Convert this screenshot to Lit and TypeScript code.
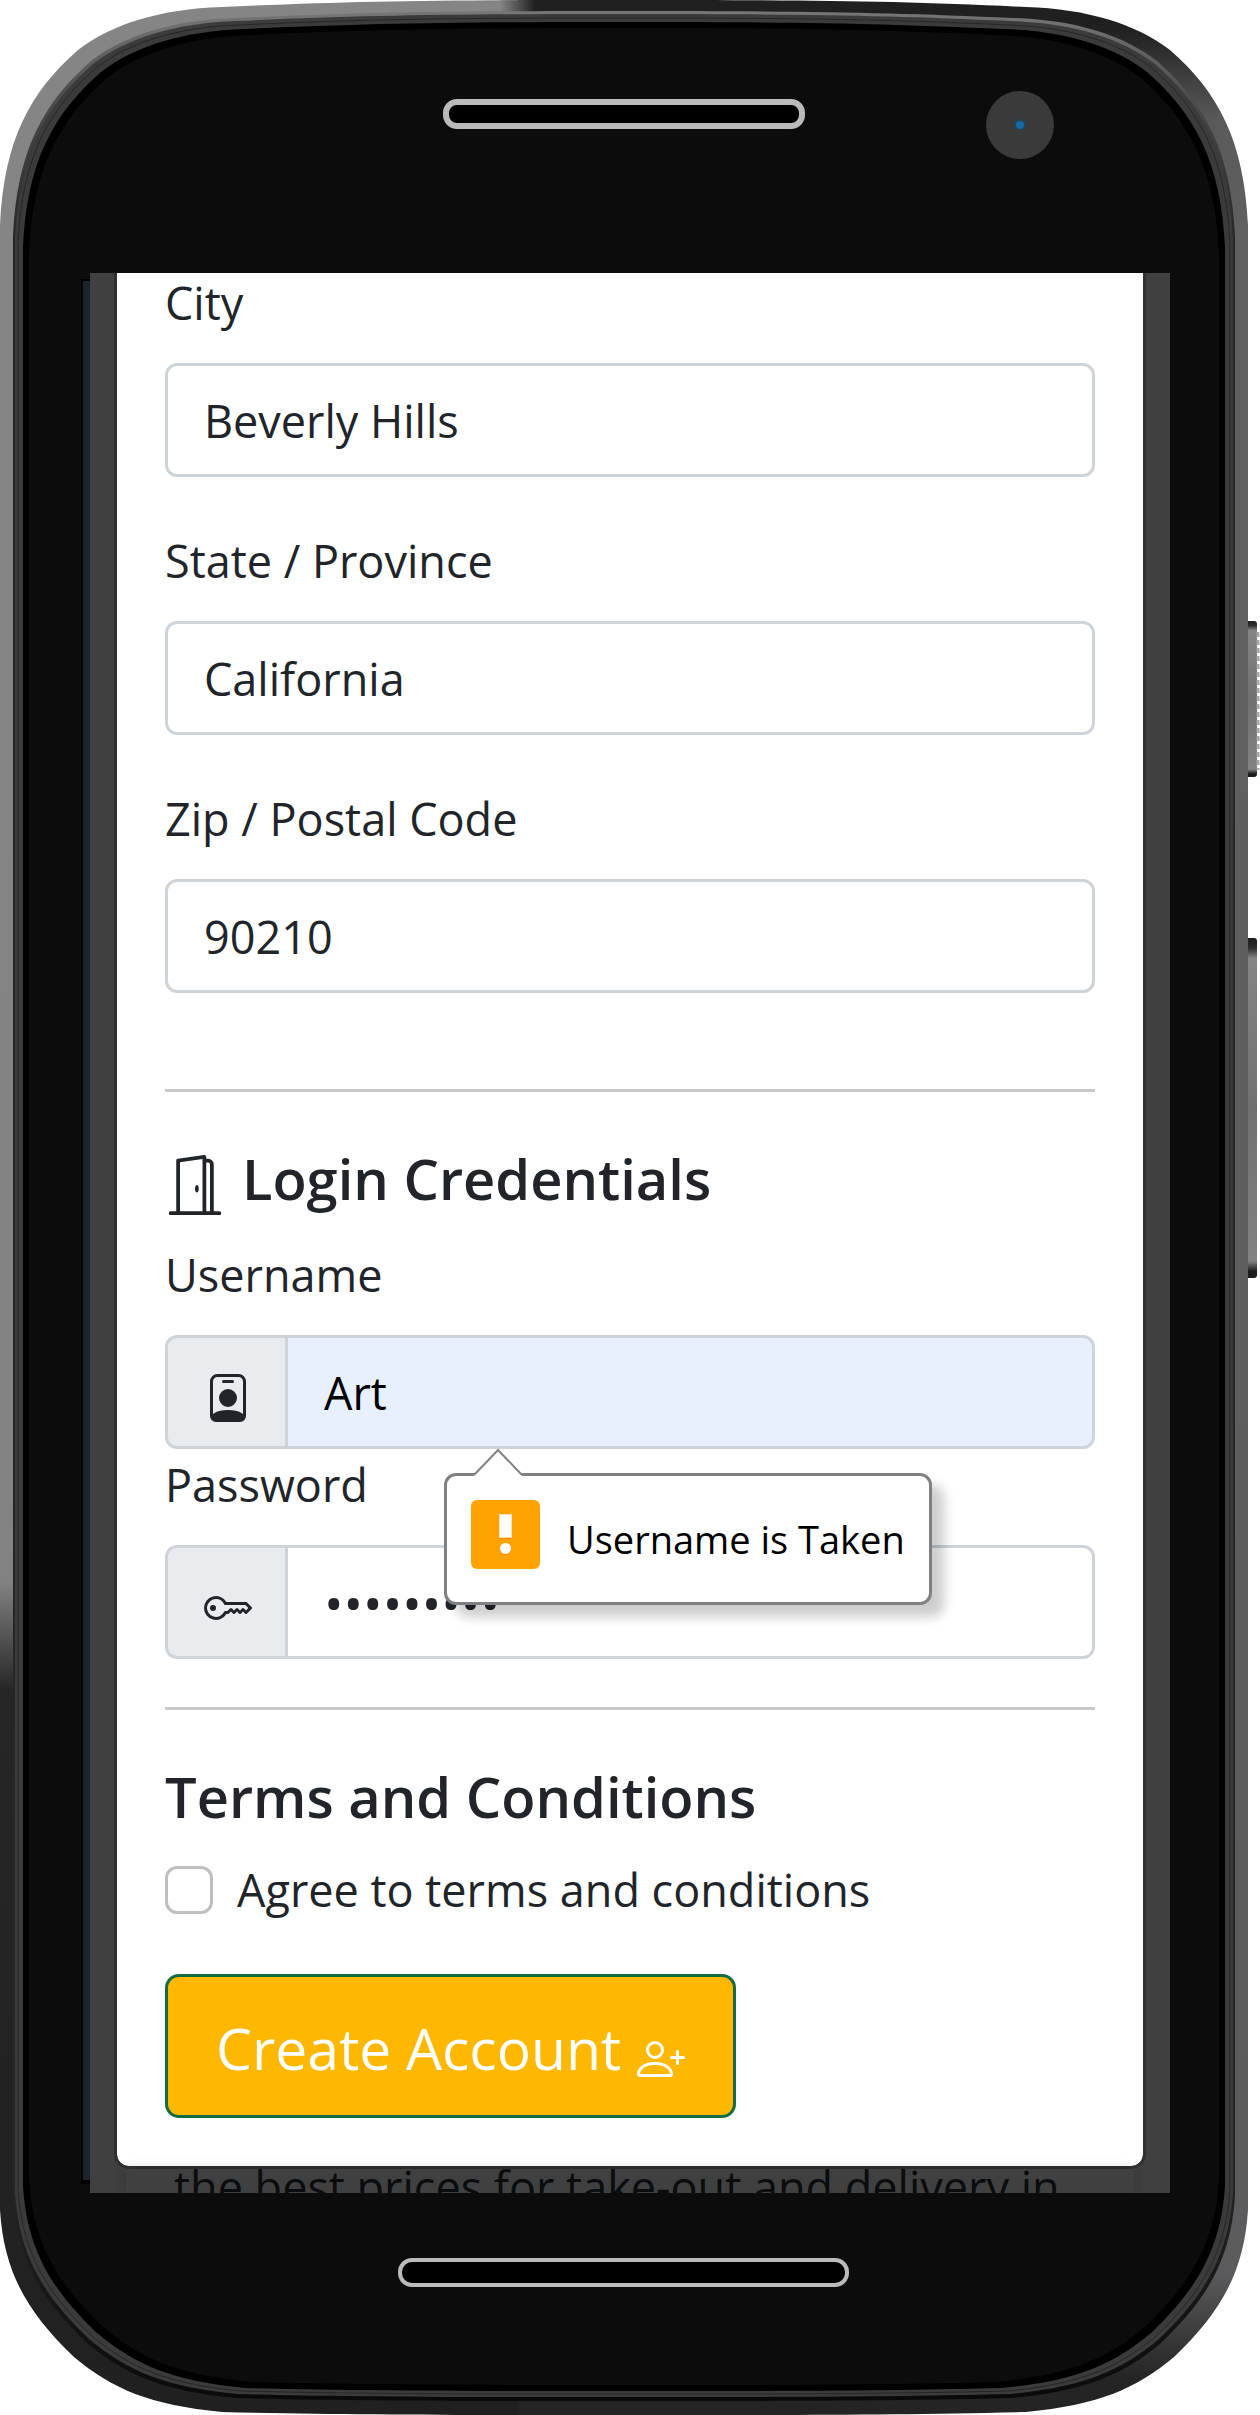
import { LitElement, html, css, svg } from "lit";
import { customElement, state } from "lit/decorators.js";

/** Closed outline of the handset, inset to the given edges. */
function bodyOutline(l: number, t: number, r: number, b: number): string {
  const mid = (l + r) / 2;
  const top = (x: number, y: number) => `${l + x} ${t + y}`;
  const topR = (x: number, y: number) => `${r - x} ${t + y}`;
  const botR = (x: number, y: number) => `${r - x} ${b - y}`;
  const botL = (x: number, y: number) => `${l + x} ${b - y}`;
  return [
    `M${top(0, 225)}`,
    `C${top(4, 140)} ${top(30, 92)} ${top(78, 50)}`,
    `C${top(112, 24)} ${top(160, 9)} ${top(222, 7)}`,
    `C${top(350, 1)} ${top(440, 0)} ${mid} ${t}`,
    `C${topR(440, 0)} ${topR(350, 1)} ${topR(222, 7)}`,
    `C${topR(160, 9)} ${topR(112, 24)} ${topR(78, 50)}`,
    `C${topR(30, 92)} ${topR(4, 140)} ${topR(0, 225)}`,
    `L${botR(0, 205)}`,
    `C${botR(4, 140)} ${botR(30, 100)} ${botR(74, 58)}`,
    `C${botR(112, 26)} ${botR(150, 10)} ${botR(222, 3)}`,
    `C${botR(350, 0)} ${botR(440, 0)} ${mid} ${b}`,
    `C${botL(440, 0)} ${botL(350, 0)} ${botL(222, 3)}`,
    `C${botL(150, 10)} ${botL(112, 26)} ${botL(74, 58)}`,
    `C${botL(30, 100)} ${botL(4, 140)} ${botL(0, 205)}Z`,
  ].join(" ");
}

const doorIcon = svg`
  <path d="M8.500 10c-.276 0-.5-.448-.5-1s.224-1 .5-1 .5.448.5 1-.224 1-.5 1z"/>
  <path d="M10.828.122A.5.5 0 0 1 11 .5V1h.5A1.500 1.500 0 0 1 13 2.500V15h1.500a.5.5 0 0 1 0 1h-13a.5.5 0 0 1 0-1H3V1.500a.5.5 0 0 1 .43-.495l7-1a.5.5 0 0 1 .398.117zM11.500 2H11v13h1V2.500a.5.5 0 0 0-.5-.5zM4 1.934V15h6V1.077l-6 .857z"/>`;

const badgeIcon = svg`
  <path d="M6.500 2a.5.5 0 0 0 0 1h3a.5.5 0 0 0 0-1h-3zM11 8a3 3 0 1 1-6 0 3 3 0 0 1 6 0z"/>
  <path d="M4.500 0A2.500 2.500 0 0 0 2 2.500V14a2 2 0 0 0 2 2h8a2 2 0 0 0 2-2V2.500A2.500 2.500 0 0 0 11.500 0h-7zM3 2.500A1.500 1.500 0 0 1 4.500 1h7A1.500 1.500 0 0 1 13 2.500v10.795a4.200 4.200 0 0 0-.776-.492C11.392 12.387 10.063 12 8 12s-3.392.387-4.224.803a4.200 4.200 0 0 0-.776.492V2.500z"/>`;

const keyIcon = svg`
  <path d="M0 8a4 4 0 0 1 7.465-2H14a.5.5 0 0 1 .354.146l1.500 1.500a.5.5 0 0 1 0 .708l-1.500 1.500a.5.5 0 0 1-.708 0L13 9.207l-.646.647a.5.5 0 0 1-.708 0L11 9.207l-.646.647a.5.5 0 0 1-.708 0L9 9.207l-.646.647A.5.5 0 0 1 8 10h-.535A4 4 0 0 1 0 8zm4-3a3 3 0 1 0 2.712 4.285A.5.5 0 0 1 7.163 9h.63l.853-.854a.5.5 0 0 1 .708 0l.646.647.646-.647a.5.5 0 0 1 .708 0l.646.647.646-.647a.5.5 0 0 1 .708 0l.646.647.793-.793-1-1h-6.630a.5.5 0 0 1-.451-.285A3 3 0 0 0 4 5z"/>
  <path d="M4 8a1 1 0 1 1-2 0 1 1 0 0 1 2 0z"/>`;

const personPlusIcon = svg`
  <path d="M6 8a3 3 0 1 0 0-6 3 3 0 0 0 0 6zm2-3a2 2 0 1 1-4 0 2 2 0 0 1 4 0zm4 8c0 1-1 1-1 1H1s-1 0-1-1 1-4 6-4 6 3 6 4zm-1-.004c-.001-.246-.154-.986-.832-1.664C9.516 10.680 8.289 10 6 10c-2.290 0-3.516.68-4.168 1.332-.678.678-.83 1.418-.832 1.664h10z"/>
  <path d="M13.500 5a.5.5 0 0 1 .5.5V7h1.500a.5.5 0 0 1 0 1H14v1.500a.5.5 0 0 1-1 0V8h-1.500a.5.5 0 0 1 0-1H13V5.500a.5.5 0 0 1 .5-.5z"/>`;

@customElement("phone-shell")
export class PhoneShell extends LitElement {
  static styles = css`
    :host {
      display: block;
      position: relative;
      padding: 273px 90px 222px;
    }
    .art {
      position: absolute;
      inset: 0;
      width: 100%;
      height: 100%;
    }
    .screen {
      position: relative;
      overflow: hidden;
      background: #404040;
    }
  `;

  render() {
    return html`
      <svg class="art" viewBox="0 0 1260 2415" preserveAspectRatio="none" aria-hidden="true">
        <defs>
          <clipPath id="body"><path d=${bodyOutline(0, 0, 1248, 2415)} /></clipPath>
          <linearGradient id="left" x1="0" y1="0" x2="0" y2="2415" gradientUnits="userSpaceOnUse">
            <stop offset="0" stop-color="#858585" />
            <stop offset="0.655" stop-color="#828282" />
            <stop offset="0.7" stop-color="#262626" />
            <stop offset="1" stop-color="#202020" />
          </linearGradient>
          <linearGradient id="right" x1="0" y1="0" x2="0" y2="2415" gradientUnits="userSpaceOnUse">
            <stop offset="0.012" stop-color="#202020" />
            <stop offset="0.05" stop-color="#5a5a5a" />
            <stop offset="0.1" stop-color="#606062" />
            <stop offset="0.94" stop-color="#5c5c5e" />
            <stop offset="0.985" stop-color="#242424" />
          </linearGradient>
          <linearGradient id="seam" x1="500" y1="0" x2="535" y2="0" gradientUnits="userSpaceOnUse">
            <stop offset="0" stop-color="#858585" />
            <stop offset="1" stop-color="#202020" />
          </linearGradient>
          <linearGradient id="key" x1="0" y1="0" x2="0" y2="1">
            <stop offset="0" stop-color="#1c1c1c" />
            <stop offset="0.03" stop-color="#303030" />
            <stop offset="0.06" stop-color="#858587" />
            <stop offset="0.5" stop-color="#707072" />
            <stop offset="0.95" stop-color="#828284" />
            <stop offset="0.98" stop-color="#1c1c1c" />
          </linearGradient>
          <linearGradient id="rim" x1="0" y1="0" x2="0" y2="2415" gradientUnits="userSpaceOnUse">
            <stop offset="0" stop-color="#7c7c7c" />
            <stop offset="0.04" stop-color="#4c4c4c" />
            <stop offset="0.1" stop-color="#262626" />
            <stop offset="0.9" stop-color="#262626" />
            <stop offset="1" stop-color="#080808" />
          </linearGradient>
        </defs>
        <rect x="1244" y="621" width="13" height="156" rx="3" fill="url(#key)" />
        <path d="M1258 632V770" stroke="#a8a8a8" stroke-width="3" stroke-dasharray="5 3" />
        <rect x="1244" y="938" width="13" height="340" rx="3" fill="url(#key)" />
        <g clip-path="url(#body)">
          <rect width="520" height="2415" fill="url(#left)" />
          <rect x="518" width="742" height="2415" fill="url(#right)" />
          <rect x="500" width="36" height="60" fill="url(#seam)" />
        </g>
        <path d=${bodyOutline(13, 11, 1235, 2401)} fill="url(#rim)" />
        <path d=${bodyOutline(15, 14, 1233, 2397)} fill="#3b3b3c" />
        <path d=${bodyOutline(18, 18, 1230, 2394)} fill="none" stroke="#262626" />
        <path d=${bodyOutline(23, 22, 1225, 2391)} fill="#000" />
        <path d=${bodyOutline(29, 28, 1219, 2385)} fill="#0c0c0c" />
        <rect x="81" y="279" width="12" height="1905" fill="#000" />
        <rect x="83" y="281" width="8" height="1899" fill="#1d232a" />
        <rect x="446" y="102" width="356" height="24" rx="11" fill="#000" stroke="#bcbabb" stroke-width="6" />
        <rect x="400" y="2260" width="447" height="25" rx="12" fill="#000" stroke="#bcbabb" stroke-width="4" />
        <circle cx="1020" cy="125" r="34" fill="#3a3a3a" />
        <circle cx="1020" cy="125" r="6" fill="#2b4251" />
        <circle cx="1020" cy="125" r="4" fill="#1269a5" />
      </svg>
      <div class="screen"><slot></slot></div>
    `;
  }
}

@customElement("app-root")
export class AppRoot extends LitElement {
  static styles = css`
    :host {
      display: block;
      background: #fff;
      color: #212529;
      font-family: "Open Sans", "Noto Sans", sans-serif;
      font-size: 45px;
      line-height: 72px;
    }
    * {
      box-sizing: border-box;
    }
    .modal {
      margin: -9px 24px 0;
      padding: 0 48px 48px;
      border: 3px solid #303030;
      border-radius: 0 0 15px 15px;
      background: #fff;
      background-clip: padding-box;
    }
    .address {
      display: grid;
      gap: 48px;
      padding-bottom: 48px;
    }
    label {
      display: block;
    }
    .field label,
    .group-label {
      margin-bottom: 24px;
    }
    input {
      font: inherit;
      color: inherit;
      margin: 0;
    }
    .text {
      display: block;
      width: 100%;
      min-width: 0;
      height: 114px;
      padding: 18px 36px;
      border: 3px solid #ced4da;
      border-radius: 12px;
      background: #fff;
      outline: none;
    }
    .group {
      display: flex;
      position: relative;
    }
    .addon {
      flex: none;
      padding: 36px 33px 24px 36px;
      border: 3px solid #ced4da;
      border-right: 0;
      border-radius: 12px 0 0 12px;
      background: #e9ecef;
    }
    .group .text {
      flex: 1;
      border-radius: 0 12px 12px 0;
    }
    .filled {
      background: #e8effd;
      color: #000;
    }
    .secret {
      font-size: 52px;
    }
    hr {
      height: 3px;
      margin: 48px 0;
      border: 0;
      background: #c8c8c9;
    }
    svg {
      display: block;
      flex: none;
      fill: currentColor;
    }
    .icon {
      width: 48px;
      height: 48px;
    }
    h2 {
      display: flex;
      gap: 17px;
      margin: 0 0 20px;
      font-size: 56px;
      font-weight: 600;
      line-height: 76px;
    }
    .with-icon {
      padding-bottom: 3px;
    }
    .icon-large {
      width: 60px;
      height: 60px;
      margin-top: 15px;
    }
    .check {
      display: flex;
      align-items: center;
      gap: 24px;
      margin-bottom: 48px;
    }
    .box {
      appearance: none;
      flex: none;
      width: 48px;
      height: 48px;
      border: 3px solid #bfbfbf;
      border-radius: 12px;
      background: #fff;
    }
    .box:checked {
      background: #0d6efd;
    }
    .submit {
      display: flex;
      align-items: flex-end;
      gap: 16px;
      padding: 26px 48px 22px;
      border: 3px solid #146c43;
      border-radius: 14px;
      background: #ffb802;
      color: #fff;
      font: inherit;
      font-size: 57px;
      line-height: 90px;
    }
    .submit .icon {
      margin-bottom: 10px;
    }
    .tip {
      position: absolute;
      z-index: 1;
      top: 138px;
      left: 279px;
      display: flex;
      gap: 27px;
      padding: 24px;
      border: 3px solid #808080;
      border-radius: 12px;
      background: #fff;
      box-shadow: 12px 12px 12px rgba(0, 0, 0, 0.2);
      color: #000;
      font-size: 38px;
      line-height: 78px;
      white-space: nowrap;
    }
    .arrow {
      position: absolute;
      top: -27px;
      left: 26px;
      width: 50px;
      height: 28px;
    }
    .warn {
      width: 69px;
      height: 69px;
    }
    .behind {
      height: 24px;
      margin: 0 36px;
      padding: 0 48px;
      overflow: hidden;
      color: #0a0c0d;
      line-height: 60px;
      white-space: nowrap;
      box-shadow: 0 0 12px rgba(0, 0, 0, 0.2);
    }
    .behind p {
      margin: -12px 0 0;
    }
  `;

  @state() private address = [
    { id: "city", label: "City", value: "Beverly Hills" },
    { id: "state", label: "State / Province", value: "California" },
    { id: "zip", label: "Zip / Postal Code", value: "90210" },
  ];

  render() {
    return html`
      <phone-shell>
        <form class="modal" @submit=${(e: Event) => e.preventDefault()}>
          <div class="address">
            ${this.address.map(
              (f) => html`
                <div class="field">
                  <label for=${f.id}>${f.label}</label>
                  <input class="text" id=${f.id} type="text" .value=${f.value} />
                </div>
              `
            )}
          </div>
          <hr />
          <h2 class="with-icon">
            <svg class="icon-large" viewBox="0 0 16 16" aria-hidden="true">${doorIcon}</svg>
            Login Credentials
          </h2>
          <label class="group-label" for="username">Username</label>
          <div class="group">
            <span class="addon"><svg class="icon" viewBox="0 0 16 16" aria-hidden="true">${badgeIcon}</svg></span>
            <input class="text filled" id="username" type="text" .value=${"Art"} aria-describedby="username-tip" />
            <div class="tip" id="username-tip" role="alert">
              <svg class="arrow" viewBox="0 0 50 28" aria-hidden="true">
                <path d="M1 28V26L25 1L49 26V28Z" fill="#fff" />
                <path d="M1 26L25 1L49 26" fill="none" stroke="#808080" stroke-width="2" />
              </svg>
              <svg class="warn" viewBox="0 0 69 69" aria-hidden="true">
                <rect width="69" height="69" rx="6" fill="#ffa300" />
                <rect x="28" y="37" width="13" height="2" fill="#ff8400" />
                <circle cx="34.500" cy="49.500" r="5.500" fill="#ff8400" />
                <rect x="28" y="14" width="13" height="24" fill="#ffe0b0" />
                <rect x="29" y="15" width="11" height="22" fill="#fff" />
                <circle cx="34.500" cy="48.500" r="5.500" fill="#fff" />
              </svg>
              <span>Username is Taken</span>
            </div>
          </div>
          <label class="group-label" for="password">Password</label>
          <div class="group">
            <span class="addon"><svg class="icon" viewBox="0 0 16 16" aria-hidden="true">${keyIcon}</svg></span>
            <input class="text secret" id="password" type="password" .value=${"password1"} />
          </div>
          <hr />
          <h2>Terms and Conditions</h2>
          <div class="check">
            <input class="box" id="terms" type="checkbox" />
            <label for="terms">Agree to terms and conditions</label>
          </div>
          <button class="submit" type="submit">
            Create Account
            <svg class="icon" viewBox="0 0 16 16" aria-hidden="true">${personPlusIcon}</svg>
          </button>
        </form>
        <div class="behind"><p>the best prices for take-out and delivery in</p></div>
      </phone-shell>
    `;
  }
}
